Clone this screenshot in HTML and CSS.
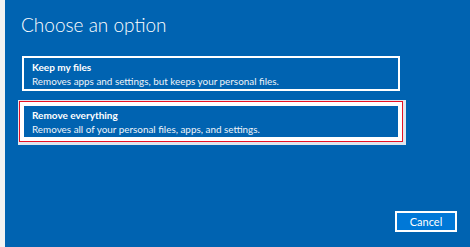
FILE: index.html
```html
<!DOCTYPE html>
<html lang="en">
<head>
    <meta charset="UTF-8">
    <title>Choose an option</title>
    <link rel="stylesheet" href="styles.css">
</head>
<body>
    <div class="screen">
        <h1>Choose an option</h1>

        <div class="options">
            <div class="option">
                <div class="option-title">Keep my files</div>
                <div class="option-desc">Removes apps and settings, but keeps your personal files.</div>
            </div>
            <div class="option selected">
                <div class="option-title">Remove everything</div>
                <div class="option-desc">Removes all of your personal files, apps, and settings.</div>
            </div>
        </div>

        <div class="footer">
            <button class="cancel">Cancel</button>
        </div>
    </div>
</body>
</html>
```

FILE: styles.css
```css
html, body {
    margin: 0;
    padding: 0;
}

body {
    width: 470px;
    height: 247px;
    overflow: hidden;
    background-color: #0063b1;
    font-family: 'Lato', 'Open Sans', sans-serif;
    color: #ffffff;
}

.screen {
    box-sizing: border-box;
    height: 247px;
    border-left: 5px solid #f2f2f2;
    padding: 10px 13px 15px 17px;
    display: flex;
    flex-direction: column;
}

h1 {
    margin: 0 0 0 -1px;
    font-size: 19px;
    font-weight: 300;
    line-height: 30px;
}

.options {
    margin-top: 16px;
    display: flex;
    flex-direction: column;
    gap: 13px;
}

.option {
    box-sizing: border-box;
    width: 378px;
    height: 35px;
    border: 2px solid #ffffff;
    padding: 2px 0 0 8px;
}

.option.selected {
    outline: 1px solid #e81123;
    outline-offset: 2px;
    box-shadow: 0 0 0 2px #ffffff, 1px 1px 0 5px #dfe6ee;
}

.option-title {
    font-size: 10px;
    font-weight: 700;
    line-height: 14px;
}

.option-desc {
    font-size: 9.9px;
    line-height: 14px;
    color: #eef3f9;
}

.footer {
    margin-top: auto;
    display: flex;
    justify-content: flex-end;
}

.cancel {
    width: 62px;
    height: 21px;
    background-color: #0078d7;
    border: 2px solid #ffffff;
    color: #ffffff;
    font-family: 'Lato', 'Open Sans', sans-serif;
    font-size: 11px;
    padding: 0;
}
```
